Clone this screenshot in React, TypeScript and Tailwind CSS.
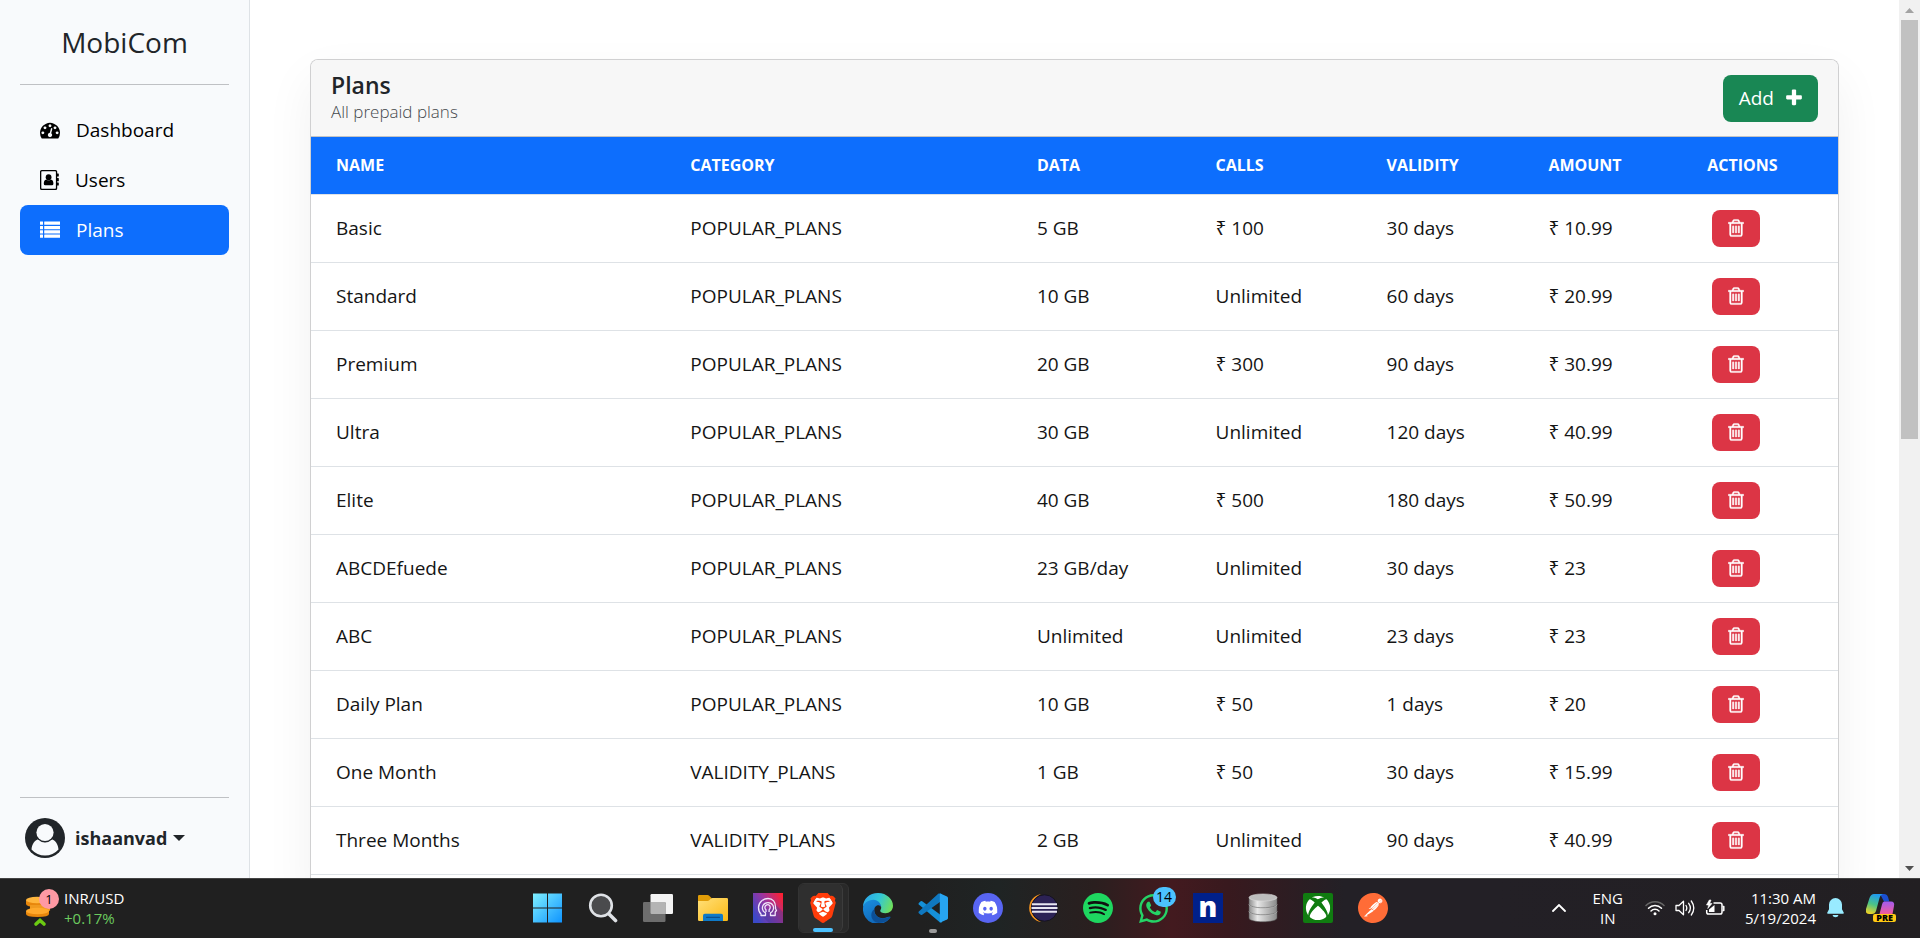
import React from "react";
import { SiBrave, SiDiscord, SiSpotify, SiPostman } from "react-icons/si";
import { FaWhatsapp, FaXbox } from "react-icons/fa";

type Plan = {
  name: string;
  category: string;
  data: string;
  calls: string;
  validity: string;
  amount: string;
};

const plan = (name: string, category: string, data: string, calls: string, validity: string, amount: string): Plan => ({
  name,
  category,
  data,
  calls,
  validity,
  amount,
});

const PLANS: Plan[] = [
  plan("Basic", "POPULAR_PLANS", "5 GB", "₹ 100", "30 days", "₹ 10.99"),
  plan("Standard", "POPULAR_PLANS", "10 GB", "Unlimited", "60 days", "₹ 20.99"),
  plan("Premium", "POPULAR_PLANS", "20 GB", "₹ 300", "90 days", "₹ 30.99"),
  plan("Ultra", "POPULAR_PLANS", "30 GB", "Unlimited", "120 days", "₹ 40.99"),
  plan("Elite", "POPULAR_PLANS", "40 GB", "₹ 500", "180 days", "₹ 50.99"),
  plan("ABCDEfuede", "POPULAR_PLANS", "23 GB/day", "Unlimited", "30 days", "₹ 23"),
  plan("ABC", "POPULAR_PLANS", "Unlimited", "Unlimited", "23 days", "₹ 23"),
  plan("Daily Plan", "POPULAR_PLANS", "10 GB", "₹ 50", "1 days", "₹ 20"),
  plan("One Month", "VALIDITY_PLANS", "1 GB", "₹ 50", "30 days", "₹ 15.99"),
  plan("Three Months", "VALIDITY_PLANS", "2 GB", "Unlimited", "90 days", "₹ 40.99"),
];

/* ---------- Page icons ---------- */

const GaugeIcon = () => (
  <svg viewBox="0 0 1792 1792" className="size-5" fill="currentColor" aria-hidden="true">
    <path d="M384 1152q0-53-37.5-90.5t-90.5-37.5-90.5 37.5-37.5 90.5 37.5 90.5 90.5 37.5 90.5-37.5 37.5-90.5zm192-448q0-53-37.5-90.5t-90.5-37.5-90.5 37.5-37.5 90.5 37.5 90.5 90.5 37.5 90.5-37.5 37.5-90.5zm428 481l101-382q6-26-7.5-48.5t-38.5-29.5-48 6.5-30 39.5l-101 382q-60 5-107 43.5t-63 98.5q-20 77 20 146t117 89 146-20 89-117q16-60-6-117t-72-91zm660-33q0-53-37.5-90.5t-90.5-37.5-90.5 37.5-37.5 90.5 37.5 90.5 90.5 37.5 90.5-37.5 37.5-90.5zm-640-640q0-53-37.5-90.5t-90.5-37.5-90.5 37.5-37.5 90.5 37.5 90.5 90.5 37.5 90.5-37.5 37.5-90.5zm448 192q0-53-37.5-90.5t-90.5-37.5-90.5 37.5-37.5 90.5 37.5 90.5 90.5 37.5 90.5-37.5 37.5-90.5zm320 448q0 261-141 483-19 29-54 29h-1402q-35 0-54-29-141-221-141-483 0-182 71-348t191-286 286-191 348-71 348 71 286 191 191 286 71 348z" />
  </svg>
);

const AddressBookIcon = () => (
  <svg viewBox="0 0 19 20" className="h-5 w-[19px]" fill="currentColor" aria-hidden="true">
    <path
      fillRule="evenodd"
      d="M1.6 0h14A1.6 1.6 0 0 1 17.200 1.600V3.600h1.100q.5 0 .5.5v2q0 .5-.5.5h-1.100v1.300h1.100q.5 0 .5.5v2.300q0 .5-.5.5h-1.100v1.300h1.100q.5 0 .5.5v2q0 .5-.5.5h-1.100v2.900a1.600 1.600 0 0 1-1.600 1.600h-14A1.600 1.600 0 0 1 0 18.400V1.600A1.600 1.600 0 0 1 1.600 0zM1.900 1.300q-.6 0-.6.6v16.200q0 .6.6.6h13.400q.6 0 .6-.6V1.900q0-.6-.6-.6z"
    />
    <circle cx="8.600" cy="7.200" r="2.900" />
    <path d="M6.300 9.400q2.300 1.900 4.600 0 2.500.3 2.500 4.400 0 1.500-1.500 1.500H5.300q-1.500 0-1.500-1.500 0-4.100 2.500-4.400z" />
  </svg>
);

const ListIcon = () => (
  <svg viewBox="0 0 20 20" className="size-5" fill="currentColor" aria-hidden="true">
    {[1.5, 6, 10.300, 14.600].map((y) => (
      <g key={y}>
        <rect x="0" y={y} width="3" height="3.200" rx="0.300" />
        <rect x="4.200" y={y} width="16" height="3.200" rx="0.300" />
      </g>
    ))}
  </svg>
);

const PlusIcon = () => (
  <svg viewBox="192 0 1408 1792" className="h-5 w-4" fill="currentColor" aria-hidden="true">
    <path d="M1600 736v192q0 40-28 68t-68 28h-416v416q0 40-28 68t-68 28h-192q-40 0-68-28t-28-68v-416h-416q-40 0-68-28t-28-68v-192q0-40 28-68t68-28h416v-416q0-40 28-68t68-28h192q40 0 68 28t28 68v416h416q40 0 68 28t28 68z" />
  </svg>
);

const TrashIcon = () => (
  <svg viewBox="192 0 1408 1792" className="h-5 w-4" fill="currentColor" stroke="currentColor" strokeWidth="35" aria-hidden="true">
    <path d="M704 736v576q0 14-9 23t-23 9h-64q-14 0-23-9t-9-23v-576q0-14 9-23t23-9h64q14 0 23 9t9 23zm256 0v576q0 14-9 23t-23 9h-64q-14 0-23-9t-9-23v-576q0-14 9-23t23-9h64q14 0 23 9t9 23zm256 0v576q0 14-9 23t-23 9h-64q-14 0-23-9t-9-23v-576q0-14 9-23t23-9h64q14 0 23 9t9 23zm128 724v-948h-896v948q0 22 7 40.5t14.5 27 10.5 8.5h832q3 0 10.5-8.5t14.5-27 7-40.5zm-672-1076h448l-48-117q-7-9-17-11h-317q-10 2-17 11zm928 32v64q0 14-9 23t-23 9h-96v948q0 83-47 143.5t-113 60.5h-832q-66 0-113-58.5t-47-141.5v-952h-96q-14 0-23-9t-9-23v-64q0-14 9-23t23-9h309l70-167q15-37 54-63t79-26h320q40 0 79 26t54 63l70 167h309q14 0 23 9t9 23z" />
  </svg>
);

const AvatarIcon = () => (
  <svg viewBox="0 0 40 40" className="size-10" aria-hidden="true">
    <circle cx="20" cy="20" r="20" fill="#212529" />
    <path d="M6.500 31.500C7 26 9.500 22.500 13.500 21q6.500 6.500 13 0c4 1.500 6.500 5 7 10.500A18 18 0 0 1 6.500 31.500z" fill="#f8fafc" />
    <circle cx="20" cy="14.500" r="9.900" fill="#212529" />
    <circle cx="20" cy="14.500" r="8.600" fill="#f8fafc" />
  </svg>
);

/* ---------- Sidebar ---------- */

type NavItemProps = { icon: React.ReactNode; label: string; active?: boolean };

const NavItem = ({ icon, label, active = false }: NavItemProps) => (
  <li>
    <a
      href="#"
      aria-current={active ? "page" : undefined}
      className={
        active
          ? "flex h-[50px] items-center gap-4 rounded-lg bg-[#0d6efd] px-5 text-white"
          : "flex h-[50px] items-center gap-4 rounded-lg px-5 text-black"
      }
    >
      {icon}
      {label}
    </a>
  </li>
);

const Sidebar = () => (
  <aside className="flex w-[250px] shrink-0 flex-col border-r border-[#dee2e6] bg-[#f8fafc] px-5 pb-5">
    <a href="#" className="flex h-21 items-center justify-center text-[28px] text-[#212529]">
      MobiCom
    </a>
    <hr className="border-[#bfc1c4]" />
    <nav className="mt-5 flex-1">
      <ul>
        <NavItem icon={<GaugeIcon />} label="Dashboard" />
        <NavItem icon={<AddressBookIcon />} label="Users" />
        <NavItem icon={<ListIcon />} label="Plans" active />
      </ul>
    </nav>
    <hr className="border-[#bfc1c4]" />
    <button type="button" className="mt-5 flex items-center gap-[10px] pl-[5px] text-lg font-bold text-[#212529]">
      <AvatarIcon />
      <span className="flex items-center gap-[6px]">
        ishaanvad
        <svg viewBox="0 0 12 6" className="h-[6px] w-3" aria-hidden="true">
          <path d="M0 0h12L6 6z" fill="currentColor" />
        </svg>
      </span>
    </button>
  </aside>
);

/* ---------- Plans card ---------- */

const headCell = "px-[25px] text-left text-base font-bold";
const cell = "px-[25px]";

const PlansCard = () => (
  <section className="overflow-hidden rounded-t-lg border border-b-0 border-[#d0d0d1] bg-white shadow-[0_20px_50px_rgba(0,0,0,0.06)]">
    <header className="flex h-[77px] items-center justify-between border-b border-[#c4c4c4] bg-[#f7f7f7] px-5">
      <div>
        <h1 className="text-[23px] leading-7 font-semibold text-[#212529]">Plans</h1>
        <p className="text-[17px] leading-[26px] font-light text-[#45494d]">All prepaid plans</p>
      </div>
      <button type="button" className="flex h-[47px] items-center gap-3 rounded-lg bg-[#198754] px-4 text-white">
        Add
        <PlusIcon />
      </button>
    </header>
    <table className="w-full table-fixed border-collapse">
      <colgroup>
        <col className="w-[23.2%]" />
        <col className="w-[22.7%]" />
        <col className="w-[11.7%]" />
        <col className="w-[11.2%]" />
        <col className="w-[10.6%]" />
        <col className="w-[10.4%]" />
        <col />
      </colgroup>
      <thead>
        <tr className="h-[57px] border-b border-[#dee2e6] bg-[#0d6efd] text-white">
          <th scope="col" className={headCell}>NAME</th>
          <th scope="col" className={headCell}>CATEGORY</th>
          <th scope="col" className={headCell}>DATA</th>
          <th scope="col" className={headCell}>CALLS</th>
          <th scope="col" className={headCell}>VALIDITY</th>
          <th scope="col" className={headCell}>AMOUNT</th>
          <th scope="col" className={headCell}>ACTIONS</th>
        </tr>
      </thead>
      <tbody className="text-[#151515]">
        {PLANS.map((p) => (
          <tr key={p.name} className="h-[68px] border-b border-[#dee2e6]">
            <td className={cell}>{p.name}</td>
            <td className={cell}>{p.category}</td>
            <td className={cell}>{p.data}</td>
            <td className={cell}>{p.calls}</td>
            <td className={cell}>{p.validity}</td>
            <td className={cell}>{p.amount}</td>
            <td className="px-[30px]">
              <button
                type="button"
                aria-label={`Delete ${p.name}`}
                className="flex h-[37px] w-12 items-center justify-center rounded-lg bg-[#dc3545] text-white"
              >
                <TrashIcon />
              </button>
            </td>
          </tr>
        ))}
      </tbody>
    </table>
    <div className="h-5" />
  </section>
);

const PageScrollbar = () => (
  <div className="flex w-[21px] shrink-0 flex-col items-center bg-[#f1f1f1]" aria-hidden="true">
    <div className="flex h-5 items-center">
      <svg viewBox="0 0 9 5" className="h-[5px] w-[9px]"><path d="M4.500 0L9 5H0z" fill="#a3a3a3" /></svg>
    </div>
    <div className="flex w-full flex-1 flex-col items-center">
      <div className="h-1/2 w-[17px] bg-[#c1c1c1]" />
    </div>
    <div className="flex h-5 items-center">
      <svg viewBox="0 0 9 5" className="h-[5px] w-[9px]"><path d="M4.500 5L9 0H0z" fill="#505050" /></svg>
    </div>
  </div>
);

/* ---------- Taskbar ---------- */

const iconSize = "size-[30px]";

const WindowsIcon = () => (
  <svg viewBox="0 0 30 30" className={iconSize}>
    <defs>
      <linearGradient id="win" x1="0" y1="0" x2="1" y2="1">
        <stop offset="0" stopColor="#7ff0ff" />
        <stop offset="1" stopColor="#0f94ff" />
      </linearGradient>
    </defs>
    <path fill="url(#win)" d="M0 0.500h14v14H0zM15 0.500h14v14H15zM0 15.500h14v14H0zM15 15.500h14v14H15z" />
  </svg>
);

const SearchIcon = () => (
  <svg viewBox="0 0 30 30" className={iconSize}>
    <circle cx="13" cy="12.500" r="10.800" fill="#4a4b4d" stroke="#dfe2e6" strokeWidth="2.600" />
    <path d="M21 21l6.500 6.500" stroke="#dfe2e6" strokeWidth="3.600" strokeLinecap="round" />
  </svg>
);

const TaskViewIcon = () => (
  <svg viewBox="0 0 30 30" className={iconSize}>
    <rect x="7.500" y="1" width="22.500" height="20" rx="1.200" fill="#f3f3f3" />
    <rect x="0" y="9" width="22.500" height="20" rx="1.200" fill="#6d6d6d" />
    <path d="M7.500 9h15v12h-13.800a1.200 1.200 0 0 1-1.200-1.200z" fill="#b4b4b4" />
  </svg>
);

const ExplorerIcon = () => (
  <svg viewBox="0 0 30 30" className={iconSize}>
    <defs>
      <linearGradient id="folder" x1="0" y1="0" x2="1" y2="1">
        <stop offset="0" stopColor="#ffe07a" />
        <stop offset="1" stopColor="#fbb914" />
      </linearGradient>
    </defs>
    <path d="M0 3.200Q0 2 1.200 2h8.300q1 0 1.700.8L13.500 5v5H0z" fill="#e09c07" />
    <path d="M0 8h9.500q1 0 1.800-.8l1.400-1.400q.8-.8 1.800-.8h14.300q1.200 0 1.200 1.200v20.600q0 1.200-1.200 1.200H1.200Q0 28 0 26.800z" fill="url(#folder)" />
    <path d="M5 28v-5.500q0-1.800 1.800-1.800h16.400q1.800 0 1.800 1.800V28z" fill="#0f7ac8" />
    <path d="M8.500 24.300h13" stroke="#0a4f8f" strokeWidth="1.200" strokeLinecap="round" />
  </svg>
);

const HeadIcon = () => (
  <svg viewBox="0 0 30 30" className={iconSize}>
    <defs>
      <linearGradient id="head" x1="0" y1="0.700" x2="1" y2="0.100">
        <stop offset="0" stopColor="#3b49c8" />
        <stop offset="0.500" stopColor="#9a35a0" />
        <stop offset="1" stopColor="#ff2030" />
      </linearGradient>
    </defs>
    <rect width="30" height="30" fill="url(#head)" />
    <path d="M7 21l9 9h14V19l-7-7z" fill="#2a3a9a" opacity="0.350" />
    <g fill="none" stroke="#f0e6fa" strokeWidth="1.300" strokeLinejoin="round">
      <path d="M8 22.500h4.500v-2.700C9.500 18.500 8.700 15 10 12.500c2-3.800 8-3.800 10 0 1.200 2.500.3 6-2.500 7.300v2.700h4.700v-3.500l1.300-1.500-1-2C23 8.500 19.500 5.500 15 5.500S5.500 9 5.500 14.500c0 3 1 5.200 2.500 6.500z" />
      <path d="M13 19v-2.300c-1.500-1-1.500-3.700.2-4.600 1.200-.7 2.700-.4 3.500.6.800 1.200.6 3.200-.6 4V19" />
    </g>
  </svg>
);

const EdgeIcon = () => (
  <svg viewBox="0 0 30 30" className={iconSize}>
    <defs>
      <linearGradient id="edgeTop" x1="0" y1="0.300" x2="1" y2="0.600">
        <stop offset="0" stopColor="#2ba7ec" />
        <stop offset="0.500" stopColor="#33c7d6" />
        <stop offset="1" stopColor="#70e05a" />
      </linearGradient>
      <linearGradient id="edgeSide" x1="0" y1="0" x2="0.600" y2="1">
        <stop offset="0" stopColor="#1a8fe0" />
        <stop offset="1" stopColor="#0f64b5" />
      </linearGradient>
    </defs>
    <path d="M0 14C0 6 6.500 0 15 0c9 0 15 6.500 15 12.700 0 4.600-3.500 7.500-7.500 7.500-3.300 0-5.300-1.200-5.300-2.400 0-1 1-1.400 1-3.300 0-2.800-3-5.500-7-5.500C6 9 1 11.500 0 14z" fill="url(#edgeTop)" />
    <path d="M0 15c0-4.500 5-8.300 10.500-8.300 4.500 0 7.500 3.800 7.700 7.500-1-1.700-2.700-2.200-4.200-1.700-2.300.8-3.200 3.500-2.500 6.500 1 4.500 6 7.300 11 5.800 2-.6 4-1.200 4.700-.8.500.3 0 .8-.3 1.200A15 15 0 0 1 0 15z" fill="url(#edgeSide)" />
    <path d="M11.300 16c-1 7 6 11.800 13.200 8.500 1.500-.7 2.800-1 3-.5C25.500 27 21 30 15.500 30 8 29 6 20 11.300 16z" fill="#0c4f96" />
  </svg>
);

const VsCodeIcon = () => (
  <svg viewBox="0 0 30 30" className={iconSize}>
    <path d="M1 9.700l1.700-1.500q.7-.5 1.500 0L24 23v6.500L21.500 29 .8 11.400q-.7-.8.2-1.700z" fill="#1590d8" />
    <path d="M4.200 21.800q-.8.600-1.500 0L.8 20.200q-.8-.8 0-1.600L20.500.5 24 1v6.500z" fill="#0f78c0" />
    <path d="M21.800.2l7.200 3.200q1 .5 1 1.500v20.200q0 1-1 1.500l-7.200 3.200z" fill="#27a5f2" />
  </svg>
);

const DiscordIcon = () => (
  <svg viewBox="0 0 30 30" className={iconSize}>
    <circle cx="15" cy="15" r="15" fill="#5865f2" />
    <SiDiscord x={5.500} y={5.500} size={19} color="#ffffff" />
  </svg>
);

const EclipseIcon = () => (
  <svg viewBox="0 0 30 30" className={iconSize}>
    <path d="M13 1A14.200 14.200 0 0 0 13 29C5.500 25 3.500 20 3.500 15S6 4.500 13 1z" fill="#f7941e" />
    <circle cx="16.500" cy="15" r="13.200" fill="#2c2255" stroke="#15131f" />
    <path d="M4 11.200h25M3.500 15h26M4 18.800h25" stroke="#e8e6f2" strokeWidth="1.900" />
  </svg>
);

const SpotifyIcon = () => (
  <svg viewBox="0 0 30 30" className={iconSize}>
    <circle cx="15" cy="15" r="13" fill="#101010" />
    <SiSpotify size={30} color="#1ed760" />
  </svg>
);

const WhatsAppIcon = () => (
  <span className="relative block">
    <FaWhatsapp className="size-[33px] text-[#25d366]" />
    <span className="absolute -top-[5px] left-4 flex h-5 w-[23px] items-center justify-center rounded-full bg-[#4cc2ff] text-[14px] leading-5 text-black">
      14
    </span>
  </span>
);

const NIcon = () => (
  <span className="flex size-[30px] items-center justify-center bg-[#00208a] pb-1 text-[28px] leading-none font-extrabold text-white">
    n
  </span>
);

const DatabaseIcon = () => (
  <svg viewBox="0 0 30 30" className={iconSize}>
    <defs>
      <linearGradient id="disk" x1="0" x2="1">
        <stop offset="0" stopColor="#8d8d8d" />
        <stop offset="0.300" stopColor="#e8e8e8" />
        <stop offset="1" stopColor="#8a8a8a" />
      </linearGradient>
    </defs>
    {[18.500, 11.500, 4.500].map((y) => (
      <g key={y}>
        <path d={`M1 ${y}v6.500c0 5 28 5 28 0V${y}z`} fill="url(#disk)" stroke="#555" strokeWidth="0.500" />
        <ellipse cx="15" cy={y} rx="14" ry="3.600" fill="#bdbdbd" stroke="#dedede" strokeWidth="0.500" />
      </g>
    ))}
  </svg>
);

const XboxIcon = () => (
  <svg viewBox="0 0 30 30" className={iconSize}>
    <rect width="30" height="30" rx="2" fill="#107c10" />
    <FaXbox x={2.500} y={2.500} size={25} color="#ffffff" />
  </svg>
);

const PostmanIcon = () => (
  <svg viewBox="0 0 30 30" className={iconSize}>
    <circle cx="15" cy="15" r="14" fill="#ffffff" />
    <SiPostman size={30} color="#ff6c37" />
  </svg>
);

const BraveIcon = () => (
  <svg viewBox="0 0 30 30" className={iconSize}>
    <path d="M8 4h14l3 6-3 13-7 5-7-5-3-13z" fill="#ffffff" />
    <SiBrave size={30} color="#ff3c0a" />
  </svg>
);

type TaskProps = { label: string; children: React.ReactNode };

const TaskButton = ({ label, children }: TaskProps) => (
  <button type="button" aria-label={label} className="flex h-[50px] w-[55px] items-center justify-center">
    {children}
  </button>
);

const RateWidget = () => (
  <button type="button" className="flex items-center gap-[5px] pl-[26px] text-left text-[15px] leading-5 text-white">
    <span className="relative block">
      <svg viewBox="0 0 33 38" className="h-[38px] w-[33px]" aria-hidden="true">
        <path d="M0 11v4q0 3 11 3t11-3v-4z" fill="#e8870c" />
        <ellipse cx="11" cy="11" rx="11" ry="3.300" fill="#ffb63d" />
        <path d="M4 16v4q0 3 11 3t9-3v-4z" fill="#f09a1f" />
        <path d="M0 22v3q0 3 11.500 3T23 25v-3z" fill="#e8870c" />
        <ellipse cx="11.500" cy="22" rx="11.500" ry="3.300" fill="#ffa92b" />
        <path d="M10 35l4-3.500 4 3.500" fill="none" stroke="#6ccb12" strokeWidth="3.600" strokeLinecap="round" />
      </svg>
      <span className="absolute top-0 left-[13px] flex size-5 items-center justify-center rounded-full bg-[#ff99a4] text-[13px] leading-5 text-black">
        1
      </span>
    </span>
    <span className="flex flex-col">
      <span>INR/USD</span>
      <span className="text-[#6ccb5f]">+0.17%</span>
    </span>
  </button>
);

const SystemTray = () => (
  <div className="flex items-center pr-6 text-[15px] leading-5 text-white">
    <button type="button" aria-label="Show hidden icons" className="mr-[26px]">
      <svg viewBox="0 0 14 8" className="h-2 w-[14px]">
        <path d="M1 7l6-6 6 6" fill="none" stroke="#ffffff" strokeWidth="1.800" strokeLinecap="round" />
      </svg>
    </button>
    <button type="button" className="mr-[22px] text-center">
      ENG
      <br />
      IN
    </button>
    <button type="button" aria-label="Quick settings" className="mr-5 flex items-center gap-[10px]">
      <svg viewBox="0 0 20 16" className="h-4 w-5" fill="none" strokeWidth="1.500" strokeLinecap="round">
        <path d="M1 5.500a12.700 12.700 0 0 1 18 0" stroke="#666666" />
        <path d="M3.500 8.200a9 9 0 0 1 13 0M6 10.900a5.600 5.600 0 0 1 8 0" stroke="#ffffff" />
        <circle cx="10" cy="13.700" r="1.500" fill="#ffffff" />
      </svg>
      <svg viewBox="0 0 20 18" className="h-[18px] w-5" fill="none" stroke="#ffffff" strokeWidth="1.300" strokeLinecap="round" strokeLinejoin="round">
        <path d="M1 6.500h3l4.500-4.300v13.600L4 11.500H1zM11 6.500q1.600 2.500 0 5M13.700 4.300q3.300 4.700 0 9.400M16.300 2q5 7 0 14" />
      </svg>
      <svg viewBox="0 0 20 18" className="h-[18px] w-5" fill="none" stroke="#ffffff" strokeWidth="1.500" strokeLinejoin="round">
        <path d="M8.500 4h6.700q1.800 0 1.800 1.800v7.400q0 1.800-1.800 1.800H3.500q-1.800 0-1.800-1.800V11" />
        <path d="M17.500 7.500h1.300v4h-1.300" />
        <path d="M4 10.500L9.500 6v7H4z" fill="#ffffff" stroke="none" />
        <path d="M4.300 1L1.500 6h2.200L2.800 9.500 7 4.500H4.700L6 1z" fill="#ffffff" strokeWidth="0.600" />
      </svg>
    </button>
    <button type="button" className="mr-[11px] text-right">
      11:30 AM
      <br />
      5/19/2024
    </button>
    <button type="button" aria-label="Notifications" className="mr-[22px]">
      <svg viewBox="0 0 17 20" className="h-5 w-[17px]" fill="#99ebff">
        <path d="M8.500 0a6.500 6.500 0 0 1 6.500 6.500v4.700l1.800 3.500q.3 1-.8 1H1q-1.100 0-.8-1L2 11.200V6.500A6.500 6.500 0 0 1 8.500 0zM5.500 17h6q-.5 2.300-3 2.300T5.500 17z" />
      </svg>
    </button>
    <button type="button" aria-label="Copilot preview" className="flex w-[30px] flex-col items-center">
      <svg viewBox="0 0 30 20" className="h-5 w-[30px]">
        <defs>
          <linearGradient id="copLeft" x1="0.500" y1="0" x2="0.200" y2="1">
            <stop offset="0" stopColor="#1f9bef" />
            <stop offset="0.500" stopColor="#4cc486" />
            <stop offset="1" stopColor="#f5d321" />
          </linearGradient>
          <linearGradient id="copRight" x1="0.500" y1="0" x2="0.500" y2="1">
            <stop offset="0" stopColor="#a25bf0" />
            <stop offset="1" stopColor="#f45c9a" />
          </linearGradient>
        </defs>
        <path d="M14 0h4q3 0 4 3l1.300 4.500H18z" fill="#1a4fd0" />
        <path d="M8 0h9q-2.500.5-3.500 4L10 17q-1 3-4 3H3q-4 0-3-5L3.500 4Q5 0 8 0z" fill="url(#copLeft)" />
        <path d="M18 7.500h7q4 0 3 4.500l-1.500 8H13.500L16 10.500q.5-2.500 2-3z" fill="url(#copRight)" />
      </svg>
      <span className="self-end rounded-xs bg-[#ffc914] px-[3px] text-[9px] leading-2 font-extrabold text-black">PRE</span>
    </button>
  </div>
);

const Taskbar = () => (
  <footer className="grid h-[60px] shrink-0 grid-cols-[1fr_auto_1fr] items-center border-t border-[#444444] bg-[linear-gradient(90deg,#202020_0%,#202020_48%,#1f2424_52%,#2a1f1f_57%,#431a1f_61%,#38191e_64%,#232026_70%,#232026_78%,#221f22_100%)] pb-px">
    <div className="flex">
      <RateWidget />
    </div>
    <div className="flex items-center pl-px">
      <TaskButton label="Start"><WindowsIcon /></TaskButton>
      <TaskButton label="Search"><SearchIcon /></TaskButton>
      <TaskButton label="Task view"><TaskViewIcon /></TaskButton>
      <TaskButton label="File Explorer"><ExplorerIcon /></TaskButton>
      <TaskButton label="Assistant"><HeadIcon /></TaskButton>
      <button
        type="button"
        aria-label="Brave"
        className="relative mx-[2px] flex h-[50px] w-[51px] items-center justify-center rounded-md border border-[#333333] bg-[#292929]"
      >
        <span className="absolute inset-y-0 left-0 w-11 rounded-md border-r border-[#3c3c3c] bg-[#2f2f2f]" />
        <span className="relative"><BraveIcon /></span>
        <span className="absolute bottom-0 h-1 w-5 rounded-full bg-[#4cc2ff]" />
      </button>
      <TaskButton label="Edge"><EdgeIcon /></TaskButton>
      <button type="button" aria-label="Visual Studio Code" className="relative flex h-[50px] w-[55px] items-center justify-center">
        <VsCodeIcon />
        <span className="absolute bottom-0 h-1 w-2 rounded-full bg-[#9a9a9a]" />
      </button>
      <TaskButton label="Discord"><DiscordIcon /></TaskButton>
      <TaskButton label="Eclipse"><EclipseIcon /></TaskButton>
      <TaskButton label="Spotify"><SpotifyIcon /></TaskButton>
      <TaskButton label="WhatsApp"><WhatsAppIcon /></TaskButton>
      <TaskButton label="N"><NIcon /></TaskButton>
      <TaskButton label="Database"><DatabaseIcon /></TaskButton>
      <TaskButton label="Xbox"><XboxIcon /></TaskButton>
      <TaskButton label="Postman"><PostmanIcon /></TaskButton>
    </div>
    <div className="flex justify-end">
      <SystemTray />
    </div>
  </footer>
);

export default function App() {
  return (
    <div className="flex h-screen flex-col bg-white font-['Open_Sans','Noto_Sans',sans-serif] text-[19px] leading-[30px]">
      <div className="flex min-h-0 flex-1">
        <Sidebar />
        <main className="min-w-0 flex-1 overflow-hidden px-[60px] pt-[59px]">
          <PlansCard />
        </main>
        <PageScrollbar />
      </div>
      <Taskbar />
    </div>
  );
}
